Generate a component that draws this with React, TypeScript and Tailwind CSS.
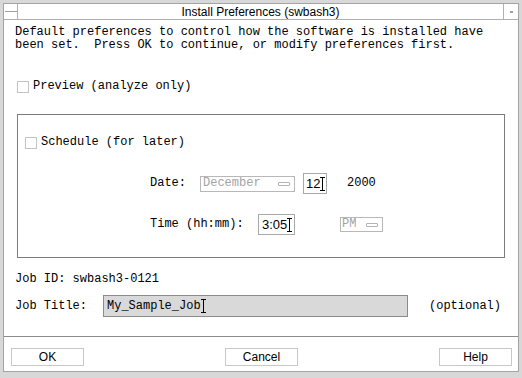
import React from 'react';

const mono = "font-['Liberation_Mono',monospace] text-[12px] leading-[13px] text-black";
const sans = "font-['Liberation_Sans',Arial,sans-serif] text-[12px] text-black";
const dim = "font-['Liberation_Mono',monospace] text-[12px] leading-[13px] text-[#a4a4a4]";

function Check() {
  return <div className="w-[12px] h-[12px] border border-[#c4c4c4] bg-white shrink-0" />;
}

function Cursor() {
  return (
    <svg width="5" height="14" viewBox="0 0 5 14" className="shrink-0">
      <path d="M0 0.5H5M2.5 0.5V13.5M0 13.5H5" stroke="#000" strokeWidth="1" fill="none" />
    </svg>
  );
}

function Dash() {
  return <div className="w-[12px] h-[4px] border border-[#b4b4b4] rounded-[1px]" />;
}

function Button({ label }: { label: string }) {
  return (
    <button className={`w-[73px] h-[18px] border border-[#c8c8c8] bg-white flex items-center justify-center ${sans}`}>
      {label}
    </button>
  );
}

export default function App() {
  return (
    <div className="w-[522px] h-[378px] bg-[#d8d8d8] pt-[3px] pl-[3px] pr-[3px] pb-[6px]">
      <div className="h-full border border-[#a4a4a4] bg-white flex flex-col">
        {/* title bar */}
        <div className="h-[16px] border-b border-[#b0b0b0] flex shrink-0">
          <div className="w-[14px] border-r border-[#b0b0b0] flex items-center justify-center">
            <div className="w-[12px] h-px bg-[#a0a0a0]" />
          </div>
          <div className={`flex-1 flex items-center justify-center ${sans} leading-[14px]`}>
            Install Preferences (swbash3)
          </div>
          <div className="w-[15px] border-l border-[#b0b0b0] flex items-center justify-center">
            <div className="w-[3px] h-[2px] bg-[#a0a0a0]" />
          </div>
        </div>

        <div className="flex-1 flex flex-col px-[11px] pt-[6px]">
          <p className={mono}>
            Default preferences to control how the software is installed have
            <br />
            been set.&nbsp; Press OK to continue, or modify preferences first.
          </p>

          <div className="mt-[28px] ml-[2px] h-[13px] flex items-center gap-[4px]">
            <Check />
            <span className={mono}>Preview (analyze only)</span>
          </div>

          <div className="mt-[21px] ml-[2px] w-[488px] h-[144px] border border-[#7c7c7c] flex flex-col shrink-0">
            <div className="mt-[21px] ml-[7px] h-[13px] flex items-center gap-[4px]">
              <Check />
              <span className={mono}>Schedule (for later)</span>
            </div>

            <div className="mt-[24px] ml-[132px] h-[21px] flex items-center">
              <span className={`${mono} w-[50px]`}>Date:</span>
              <div className="w-[95px] h-[16px] border border-[#b8b8b8] flex items-center justify-between pl-[2px] pr-[4px]">
                <span className={dim}>December</span>
                <Dash />
              </div>
              <div className="ml-[8px] w-[24px] h-[21px] border border-[#a8a8a8] flex items-center pl-[2px]">
                <span className={`${sans} text-[13px] leading-[14px]`}>12</span>
                <Cursor />
              </div>
              <span className={`${mono} ml-[20px]`}>2000</span>
            </div>

            <div className="mt-[20px] ml-[132px] h-[21px] flex items-center">
              <span className={`${mono} w-[108px]`}>Time (hh:mm):</span>
              <div className="w-[37px] h-[21px] border border-[#a8a8a8] flex items-center pl-[3px]">
                <span className={`${sans} text-[13px] leading-[14px]`}>3:05</span>
                <Cursor />
              </div>
              <div className="ml-[45px] w-[43px] h-[15px] border border-[#b8b8b8] flex items-center justify-between pl-[1px] pr-[4px]">
                <span className={dim}>PM</span>
                <Dash />
              </div>
            </div>
          </div>

          <div className={`mt-[15px] ${mono}`}>Job ID: swbash3-0121</div>

          <div className="mt-[9px] h-[22px] flex items-center">
            <span className={`${mono} w-[88px]`}>Job Title:</span>
            <div className="w-[305px] h-[22px] bg-[#d9d9d9] border border-[#8c8c8c] flex items-center pl-[3px]">
              <span className={mono}>My_Sample_Job</span>
              <Cursor />
            </div>
            <span className={`${mono} ml-[21px]`}>(optional)</span>
          </div>
        </div>

        <div className="border-t border-[#8c8c8c] h-[35px] pt-[11px] pl-[7px] pr-[6px] flex items-start justify-between shrink-0">
          <Button label="OK" />
          <Button label="Cancel" />
          <Button label="Help" />
        </div>
      </div>
    </div>
  );
}
